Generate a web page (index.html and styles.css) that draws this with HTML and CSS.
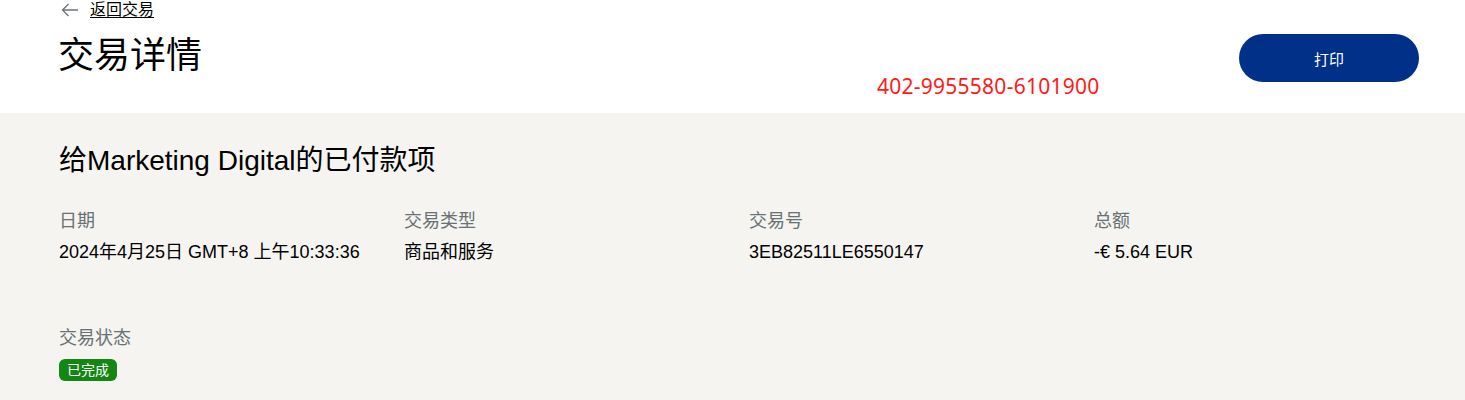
FILE: index.html
```html
<!DOCTYPE html>
<html lang="zh-CN">
<head>
<meta charset="utf-8">
<title>交易详情</title>
<link rel="stylesheet" href="styles.css">
</head>
<body>
<header class="top">
  <a class="back" href="#">
    <svg class="back-icon" width="18" height="14" viewBox="0 0 18 14" aria-hidden="true">
      <path d="M17 7H1.5M7.5 1L1.5 7l6 6" fill="none" stroke="#6c7378" stroke-width="1.3"/>
    </svg>
    <span class="back-text">返回交易</span>
  </a>
  <div class="title-row">
    <h1 class="title">交易详情</h1>
    <button class="print" type="button">打印</button>
  </div>
  <div class="annot">402-9955580-6101900</div>
</header>
<main class="details">
  <h2 class="heading">给Marketing Digital的已付款项</h2>
  <div class="grid">
    <div class="field">
      <div class="label">日期</div>
      <div class="value">2024年4月25日 GMT+8 上午10:33:36</div>
    </div>
    <div class="field">
      <div class="label">交易类型</div>
      <div class="value">商品和服务</div>
    </div>
    <div class="field">
      <div class="label">交易号</div>
      <div class="value">3EB82511LE6550147</div>
    </div>
    <div class="field">
      <div class="label">总额</div>
      <div class="value">-€ 5.64 EUR</div>
    </div>
  </div>
  <div class="status">
    <div class="label">交易状态</div>
    <span class="badge">已完成</span>
  </div>
</main>
</body>
</html>
```
FILE: styles.css
```css
html, body {
  margin: 0;
  padding: 0;
}
body {
  font-family: "Liberation Sans", "Noto Sans CJK SC", sans-serif;
  color: #000;
  background: #f5f4f0;
  height: 400px;
  overflow: hidden;
}
.top {
  position: relative;
  background: #fff;
  height: 113px;
  box-sizing: border-box;
  padding: 0 46px 0 59px;
}
.back {
  display: inline-flex;
  align-items: center;
  gap: 11px;
  height: 20px;
  color: #000;
  text-decoration: none;
  padding-left: 2px;
}
.back-icon {
  display: block;
}
.back-text {
  font-size: 16px;
  line-height: 20px;
  text-decoration: underline;
  text-underline-offset: 2px;
}
.title-row {
  display: flex;
  justify-content: space-between;
  align-items: flex-start;
  margin-top: 13px;
}
.title {
  margin: 0 0 0 -1px;
  font-size: 36px;
  font-weight: 400;
  line-height: 44px;
}
.print {
  width: 180px;
  height: 48px;
  border: none;
  border-radius: 24px;
  background: #003087;
  color: #fff;
  font-family: inherit;
  font-size: 15px;
  margin-top: 0;
  cursor: pointer;
}
.annot {
  position: absolute;
  left: 877px;
  top: 72px;
  color: #ff1a1a;
  font-family: "Noto Sans", "Noto Sans CJK SC", sans-serif;
  font-size: 21px;
  letter-spacing: 0.25px;
  line-height: 28px;
}
.details {
  padding: 0 59px;
}
.heading {
  margin: 0;
  padding-top: 30px;
  font-size: 28px;
  font-weight: 400;
  line-height: 36px;
}
.grid {
  display: grid;
  grid-template-columns: repeat(4, 345px);
  margin-top: 30px;
}
.label {
  color: #687173;
  font-size: 18px;
  line-height: 24px;
}
.value {
  font-size: 18px;
  line-height: 24px;
  margin-top: 7px;
}
.status {
  display: flex;
  flex-direction: column;
  align-items: flex-start;
  margin-top: 62px;
}
.badge {
  margin-top: 9px;
  background: #138613;
  color: #fff;
  font-size: 14px;
  line-height: 22px;
  height: 22px;
  padding: 0 8px;
  border-radius: 6px;
}
```
